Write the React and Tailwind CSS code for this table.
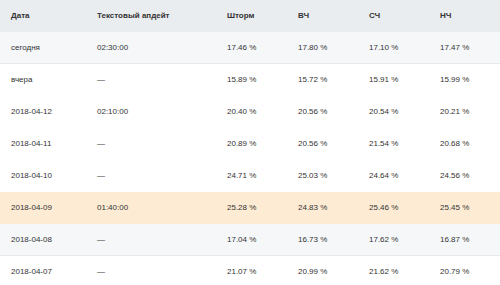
const rows = [
  { date: "сегодня", upd: "02:30:00", v: ["17.46 %", "17.80 %", "17.10 %", "17.47 %"], bg: "bg-[#f5f7f9] border-b border-[#e6eaee]" },
  { date: "вчера", upd: "—", v: ["15.89 %", "15.72 %", "15.91 %", "15.99 %"], bg: "bg-white" },
  { date: "2018-04-12", upd: "02:10:00", v: ["20.40 %", "20.56 %", "20.54 %", "20.21 %"], bg: "bg-white" },
  { date: "2018-04-11", upd: "—", v: ["20.89 %", "20.56 %", "21.54 %", "20.68 %"], bg: "bg-white" },
  { date: "2018-04-10", upd: "—", v: ["24.71 %", "25.03 %", "24.64 %", "24.56 %"], bg: "bg-white" },
  { date: "2018-04-09", upd: "01:40:00", v: ["25.28 %", "24.83 %", "25.46 %", "25.45 %"], bg: "bg-[#fdebd4]" },
  { date: "2018-04-08", upd: "—", v: ["17.04 %", "16.73 %", "17.62 %", "16.87 %"], bg: "bg-[#f5f7f9] border-b border-[#e6eaee]" },
  { date: "2018-04-07", upd: "—", v: ["21.07 %", "20.99 %", "21.62 %", "20.79 %"], bg: "bg-white" },
];

const cols = "grid grid-cols-[86px_130px_71px_71px_71px_1fr] items-center pl-[11px]";

export default function App() {
  return (
    <div className="w-[500px] h-[285px] overflow-hidden bg-white text-[8px] text-[#333] font-['Liberation_Sans',Arial,sans-serif]">
      <div className={`${cols} h-[32px] bg-[#eaedf0] font-bold text-[#333]`}>
        <div>Дата</div>
        <div>Текстовый апдейт</div>
        <div>Шторм</div>
        <div>ВЧ</div>
        <div>СЧ</div>
        <div>НЧ</div>
      </div>
      {rows.map((r) => (
        <div key={r.date} className={`${cols} h-[32px] box-border ${r.bg}`}>
          <div>{r.date}</div>
          <div>{r.upd}</div>
          {r.v.map((x, i) => (
            <div key={i}>{x}</div>
          ))}
        </div>
      ))}
    </div>
  );
}
